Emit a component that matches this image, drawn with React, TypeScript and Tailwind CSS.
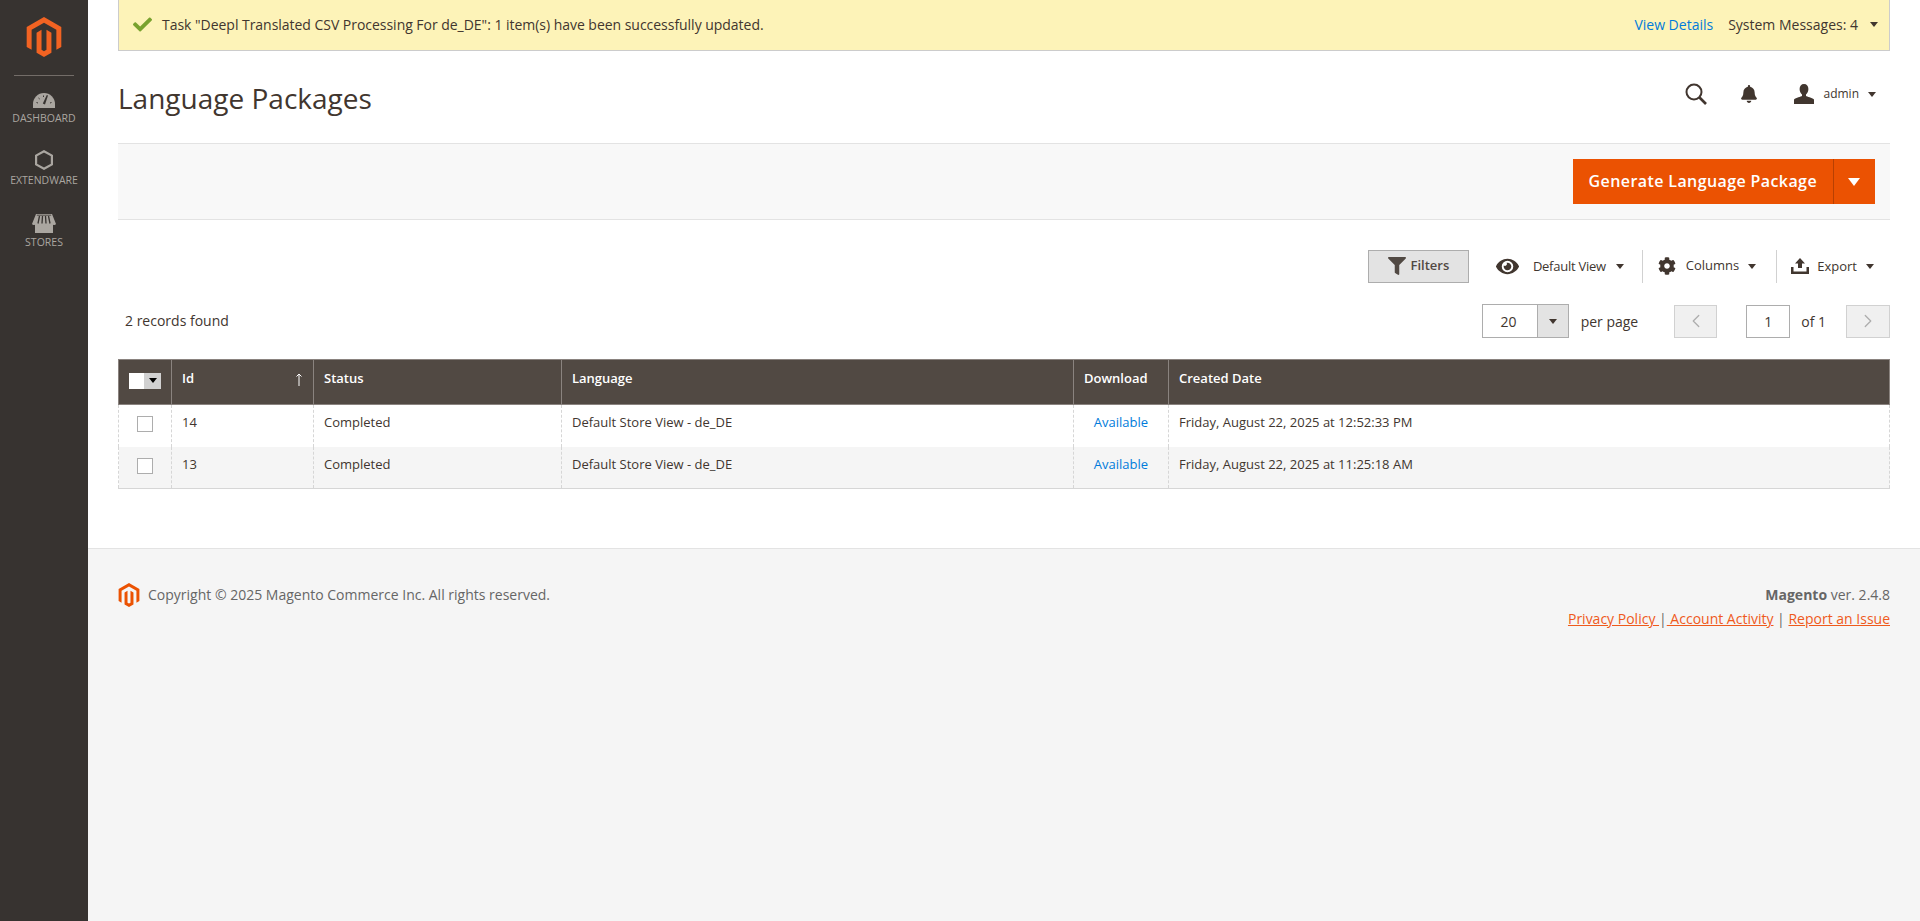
import { ChevronLeft, ChevronRight } from 'lucide-react';
import { FaBell, FaCheck, FaCog, FaEye, FaFilter } from 'react-icons/fa';
import { SiMagento } from 'react-icons/si';

// Shared bits

function Caret({ className = 'border-t-[#41362f]' }: { className?: string }) {
  return <span className={`inline-block h-0 w-0 border-x-[4px] border-t-[5px] border-x-transparent ${className}`} />;
}

function NavItem({ label, icon, className }: { label: string; icon: React.ReactNode; className: string }) {
  return (
    <div className={`flex flex-col items-center text-[10.5px] leading-[16px] text-[#aaa6a0] uppercase ${className}`}>
      {icon}
      <span>{label}</span>
    </div>
  );
}

// Sidebar

function Sidebar() {
  return (
    <aside className="flex w-[88px] shrink-0 flex-col items-center bg-[#373330]">
      <SiMagento className="mt-[17px] size-[40px] text-[#f26322]" />
      <div className="mt-[18px] h-px w-[60px] bg-[#736d68]" />
      <NavItem
        className="mt-[16px]"
        label="Dashboard"
        icon={
          <svg viewBox="0 0 22 16" className="mb-[2px] h-[16px] w-[22px]">
            <path d="M0 16V12A11 11 0 0 1 22 12V16Z" fill="#aaa6a0" />
            <path d="M12 12.500 15 3.500 13.800 3 9.800 11.500Z" fill="#373330" />
            <path d="M3.500 10.500 5 11M5.500 6l1.200 1M10.500 3.500V5M18.500 10.500 17 11" stroke="#373330" />
          </svg>
        }
      />
      <NavItem
        className="mt-[24px]"
        label="Extendware"
        icon={
          <svg viewBox="0 0 18 20" className="mb-[2px] h-[20px] w-[18px]" fill="none" stroke="#aaa6a0" strokeWidth="2.200">
            <path d="M9 1.200 16.900 5.600V14.400L9 18.800 1.100 14.400V5.600Z" />
          </svg>
        }
      />
      <NavItem
        className="mt-[26px]"
        label="Stores"
        icon={
          <svg viewBox="0 0 24 19" className="mb-px h-[19px] w-[24px]" fill="#aaa6a0">
            <path d="M4 0h16l4 10q-1 1.800-3 .7V19H3V10.700Q1 11.800 0 10z" />
            <path d="M7.500 2 6 9.500M10.500 2 10 9.500M13.500 2 14 9.500M16.500 2 18 9.500" stroke="#373330" strokeWidth="1.300" />
            <path d="M4.800 1.200h14.400" stroke="#373330" strokeWidth="0.800" />
          </svg>
        }
      />
    </aside>
  );
}

// Header area

function MessageBar() {
  return (
    <div className="flex h-[51px] items-center justify-between border-x border-b border-[#ccc] bg-[#fdf3b8] pr-[11px] pb-[1px] pl-[14px] text-[14px] text-[#41362f]">
      <div className="flex items-center gap-[10px]">
        <FaCheck className="size-[19px] text-[#79a22e]" />
        <span className="tracking-[-0.03px]">Task "Deepl Translated CSV Processing For de_DE": 1 item(s) have been successfully updated.</span>
      </div>
      <div className="flex items-center">
        <span className="text-[#007bdb]">View Details</span>
        <span className="ml-[15px]">System Messages: 4</span>
        <span className="ml-[12px] flex"><Caret /></span>
      </div>
    </div>
  );
}

function TitleRow() {
  return (
    <div className="flex h-[92px] items-center justify-between">
      <h1 className="pt-[1px] text-[28px] font-normal text-[#41362f]">Language Packages</h1>
      <div className="mr-[14px] flex items-center pb-[6px] text-[#41362f]">
        <svg viewBox="0 0 22 22" className="size-[22px]" fill="none" stroke="#41362f">
          <circle cx="9" cy="9" r="7.500" strokeWidth="2" />
          <path d="M14.500 14.500 21 21" strokeWidth="2.600" />
        </svg>
        <FaBell className="ml-[33px] size-[18px]" />
        <svg viewBox="0 0 20 20" className="ml-[36px] size-[20px]" fill="#41362f">
          <path d="M10 0c2.800 0 4.400 2 4.400 5 0 2.400-1.100 4.400-2.400 5.400v1.600c1 .8 6 1.600 8 3.500V20H0v-4.500c2-1.900 7-2.700 8-3.500v-1.600C6.700 9.400 5.600 7.400 5.600 5 5.600 2 7.200 0 10 0z" />
        </svg>
        <span className="ml-[9px] text-[12px]">admin</span>
        <span className="ml-[9px] flex"><Caret /></span>
      </div>
    </div>
  );
}

function ActionBar() {
  return (
    <div className="flex h-[77px] items-center justify-end border-y border-[#e3e3e3] bg-[#f8f8f8] pr-[15px]">
      <div className="flex h-[45px] bg-[#eb5202] text-white">
        <span className="flex items-center border-r border-[#b84002] px-[16px] pb-[1px] text-[16px] font-semibold tracking-[0.025em]">
          Generate Language Package
        </span>
        <span className="flex w-[41px] items-center justify-center pr-[2px]">
          <Caret className="border-x-[6px] border-t-[8px] border-t-white" />
        </span>
      </div>
    </div>
  );
}

// Grid toolbar

function Toolbar() {
  return (
    <div className="mt-[29px] flex h-[34px] items-center justify-end pr-[16px] text-[13px] text-[#41362f]">
      <div className="flex h-[33px] w-[101px] items-center justify-center gap-[5px] border border-[#adadad] bg-[#e3e3e3] font-semibold text-[#514943]">
        <FaFilter className="size-[18px]" />
        <span>Filters</span>
      </div>
      <FaEye className="ml-[27px] size-[23px]" />
      <span className="ml-[14px] pt-[1px] tracking-[-0.02em]">Default View</span>
      <span className="ml-[10px] flex"><Caret /></span>
      <div className="ml-[18px] h-[33px] w-px bg-[#d1d1d1]" />
      <FaCog className="ml-[15px] size-[18px]" />
      <span className="ml-[10px]">Columns</span>
      <span className="ml-[9px] flex"><Caret /></span>
      <div className="ml-[20px] h-[33px] w-px bg-[#d1d1d1]" />
      <svg viewBox="0 0 18 16" className="ml-[14px] h-[16px] w-[18px]" fill="#41362f">
        <path d="M9 0l5 5.500h-3V10H7V5.500H4z" />
        <path d="M0 9h2.500v4.500h13V9H18v7H0z" />
      </svg>
      <span className="ml-[8px] pt-[1px]">Export</span>
      <span className="ml-[9px] flex"><Caret /></span>
    </div>
  );
}

function Pagination() {
  return (
    <div className="mt-[21px] flex h-[34px] items-center justify-between text-[13px] text-[#41362f]">
      <span className="pb-[2px] pl-[7px] text-[14px]">2 records found</span>
      <div className="flex items-center text-[14px]">
        <div className="flex h-[34px] w-[87px] border border-[#adadad]">
          <span className="flex flex-1 items-center justify-center pr-[2px]">20</span>
          <span className="flex w-[31px] items-center justify-center border-l border-[#adadad] bg-[#e3e3e3]">
            <Caret />
          </span>
        </div>
        <span className="ml-[12px]">per page</span>
        <div className="ml-[36px] flex h-[33px] w-[43px] items-center justify-center border border-[#d1d1d1] bg-[#f0f0f0] text-[#adadad]">
          <ChevronLeft className="size-[22px]" strokeWidth={1.4} />
        </div>
        <div className="ml-[29px] flex h-[33px] w-[44px] items-center justify-center border border-[#adadad]">1</div>
        <span className="ml-[11px]">of 1</span>
        <div className="ml-[20px] flex h-[33px] w-[44px] items-center justify-center border border-[#d1d1d1] bg-[#f0f0f0] text-[#adadad]">
          <ChevronRight className="size-[22px]" strokeWidth={1.4} />
        </div>
      </div>
    </div>
  );
}

// Grid

const rows = [
  { id: '14', date: 'Friday, August 22, 2025 at 12:52:33 PM', pad: 'pb-[7px]' },
  { id: '13', date: 'Friday, August 22, 2025 at 11:25:18 AM', pad: 'pb-[5px]' },
];

const th = 'h-[45px] border-x border-y border-[#8a837f] bg-[#514943] px-[10px] pb-[6px] text-left align-middle font-semibold text-white';
const td = 'h-[42px] border-x border-dashed border-[#d6d6d6] px-[10px] align-middle';

function RowCheckbox() {
  return <div className="mx-auto mt-[3px] size-[16px] border border-[#adadad] bg-white" />;
}

function Grid() {
  return (
    <table className="mt-[21px] w-full table-fixed border-collapse border-b border-[#d6d6d6] text-[13px] text-[#41362f]">
      <colgroup>
        <col className="w-[53px]" />
        <col className="w-[142px]" />
        <col className="w-[248px]" />
        <col className="w-[512px]" />
        <col className="w-[95px]" />
        <col />
      </colgroup>
      <thead>
        <tr>
          <th className={th}>
            <div className="mt-[3px] flex h-[16px] w-[32px]">
              <span className="w-[15px] bg-white" />
              <span className="flex flex-1 items-center justify-center bg-[#d1d1d1]"><Caret className="border-t-black" /></span>
            </div>
          </th>
          <th className={th}>
            <div className="flex items-center justify-between">
              <span>Id</span>
              <svg viewBox="0 0 8 13" className="h-[13px] w-[8px]" fill="none" stroke="white">
                <path d="M4 13V1M1.500 3.500 4 1l2.500 2.500" />
              </svg>
            </div>
          </th>
          <th className={th}>Status</th>
          <th className={th}>Language</th>
          <th className={th}>Download</th>
          <th className={th}>Created Date</th>
        </tr>
      </thead>
      <tbody>
        {rows.map((row, i) => (
          <tr key={row.id} className={i % 2 ? 'bg-[#f5f5f5]' : 'bg-white'}>
            <td className={`${td} ${row.pad} border-l-[#d6d6d6]`}><RowCheckbox /></td>
            <td className={`${td} ${row.pad}`}>{row.id}</td>
            <td className={`${td} ${row.pad}`}>Completed</td>
            <td className={`${td} ${row.pad}`}>Default Store View - de_DE</td>
            <td className={`${td} ${row.pad} text-center text-[#007bdb]`}>Available</td>
            <td className={`${td} ${row.pad}`}>{row.date}</td>
          </tr>
        ))}
      </tbody>
    </table>
  );
}

// Footer

function Footer() {
  return (
    <footer className="flex justify-between border-t border-[#e3e3e3] pt-[26px] pr-[30px] pl-[30px] text-[14px] leading-[20px] text-[#666]">
      <div className="flex items-start">
        <SiMagento className="mt-[8px] ml-[-1px] size-[24px] text-[#eb5202]" />
        <span className="mt-[10px] ml-[7px]">Copyright © 2025 Magento Commerce Inc. All rights reserved.</span>
      </div>
      <div className="mt-[10px] text-right">
        <div><span className="font-bold">Magento</span> ver. 2.4.8</div>
        <div className="mt-[4px] whitespace-pre">
          <span className="text-[#ef5a1c] underline">Privacy Policy </span>
          <span>|</span>
          <span className="text-[#ef5a1c] underline"> Account Activity</span>
          <span> | </span>
          <span className="text-[#ef5a1c] underline">Report an Issue</span>
        </div>
      </div>
    </footer>
  );
}

export default function App() {
  return (
    <div className="flex min-h-[921px] bg-[#f5f5f5] font-['Open_Sans',sans-serif]">
      <Sidebar />
      <main className="flex min-w-0 flex-1 flex-col">
        <div className="h-[548px] bg-white pr-[30px] pl-[30px]">
          <MessageBar />
          <TitleRow />
          <ActionBar />
          <Toolbar />
          <Pagination />
          <Grid />
        </div>
        <Footer />
      </main>
    </div>
  );
}
